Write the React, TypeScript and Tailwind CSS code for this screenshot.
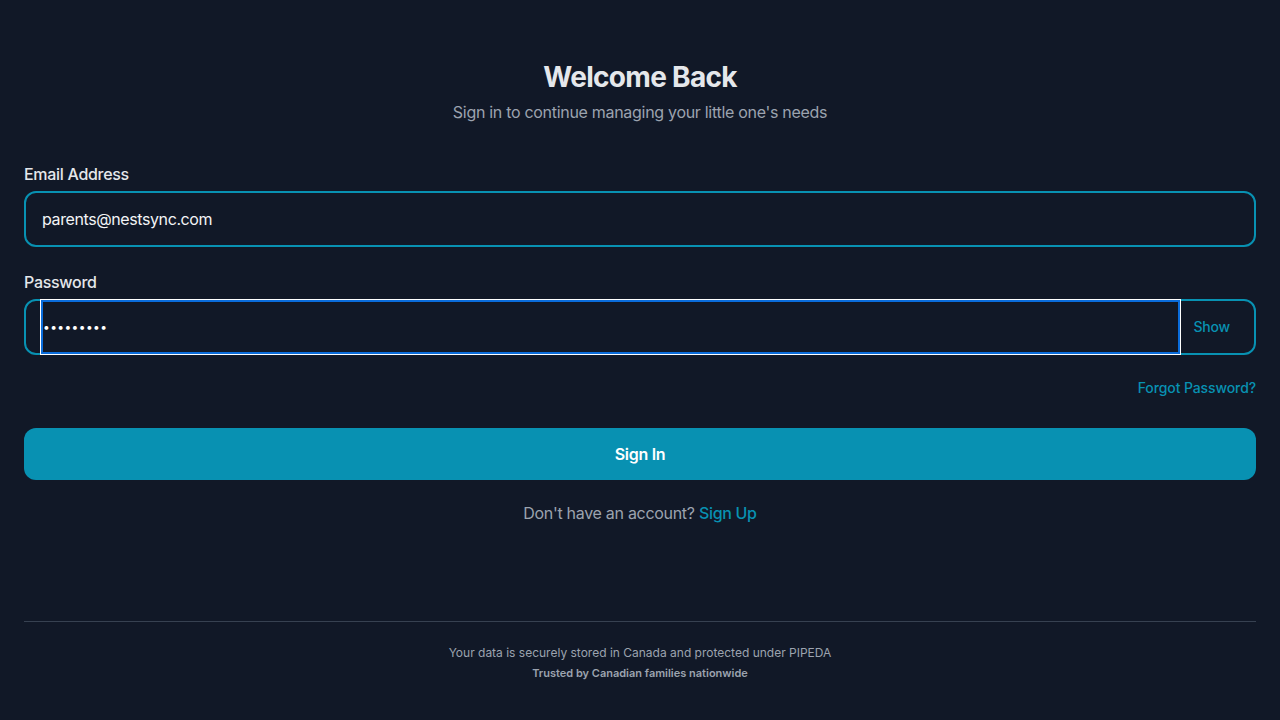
import React from "react";

export default function App() {
  return (
    <div
      className="min-h-[720px] w-full bg-[#111827] px-6"
      style={{ fontFamily: "Inter, 'Noto Sans', sans-serif" }}
    >
      <div className="flex flex-col">
        <div className="pt-[60px] text-center">
          <h1 className="text-[28px] leading-[34px] font-bold tracking-[-0.7px] text-[#e5e7eb]">Welcome Back</h1>
          <p className="mt-[6px] text-base leading-6 tracking-[-0.3px] text-[#9ca3af]">
            Sign in to continue managing your little one's needs
          </p>
        </div>

        <div className="mt-[38px]">
          <label className="block text-base leading-6 font-medium tracking-[-0.3px] text-[#e5e7eb] mb-[5px]">
            Email Address
          </label>
          <div className="flex h-[56px] items-center rounded-xl border-2 border-[#0891b2] px-4">
            <span className="text-base tracking-[-0.4px] text-[#f3f4f6]">parents@nestsync.com</span>
          </div>
        </div>

        <div className="mt-[23px]">
          <label className="block text-base leading-6 font-medium tracking-[-0.3px] text-[#e5e7eb] mb-[5px]">
            Password
          </label>
          <div className="flex h-[56px] items-stretch rounded-xl border-2 border-[#0891b2] pl-[15px]">
            <div className="flex flex-1 items-center border-2 border-[#0a6cdb] shadow-[0_0_0_1px_#ffffff] -my-[1px]">
              <span className="text-[12px] tracking-[0.4px] text-white leading-none">•••••••••</span>
            </div>
            <div className="flex items-center pl-[14px] pr-[24px] text-sm font-medium tracking-[-0.2px] text-[#0891b2]">Show</div>
          </div>
        </div>

        <div className="mt-[23px] flex justify-end">
          <span className="text-sm leading-5 font-medium tracking-[-0.1px] text-[#0891b2]">Forgot Password?</span>
        </div>

        <button className="mt-[30px] h-[52px] w-full rounded-xl bg-[#0891b2] text-base font-semibold tracking-[-0.3px] text-white">
          Sign In
        </button>

        <p className="mt-[21px] text-center text-base leading-6 tracking-[-0.3px] text-[#9ca3af]">
          Don't have an account? <span className="font-medium text-[#0891b2]">Sign Up</span>
        </p>

        <div className="mt-[96px] h-px bg-[#374151]" />

        <div className="pt-[23px] text-center">
          <p className="text-xs leading-4 text-[#9ca3af]">
            Your data is securely stored in Canada and protected under PIPEDA
          </p>
          <p className="mt-1 text-[11px] leading-4 font-semibold text-[#9ca3af]">
            Trusted by Canadian families nationwide
          </p>
        </div>
      </div>
    </div>
  );
}
